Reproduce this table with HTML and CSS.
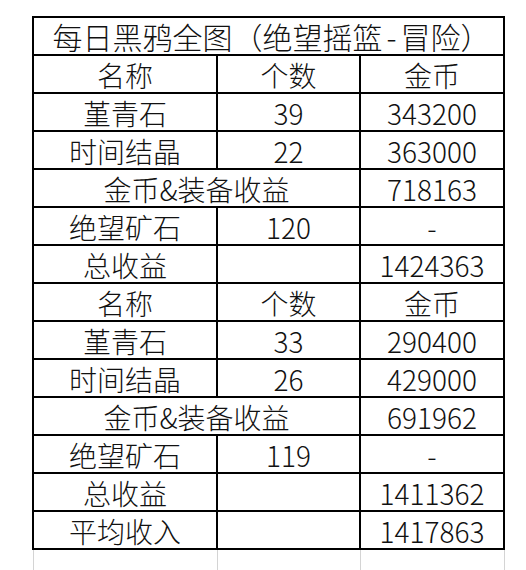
FILE: index.html
```html
<!DOCTYPE html>
<html lang="zh-CN">
<head>
<meta charset="utf-8">
<title>每日黑鸦全图</title>
<link rel="stylesheet" href="styles.css">
</head>
<body>
<div class="sheet">
  <div class="table">
    <div class="cell title span3">每日黑鸦全图（绝望摇篮<span class="dash">-</span>冒险）</div>

    <div class="cell">名称</div>
    <div class="cell">个数</div>
    <div class="cell">金币</div>

    <div class="cell">堇青石</div>
    <div class="cell">39</div>
    <div class="cell">343200</div>

    <div class="cell">时间结晶</div>
    <div class="cell">22</div>
    <div class="cell">363000</div>

    <div class="cell span2">金币&amp;装备收益</div>
    <div class="cell">718163</div>

    <div class="cell">绝望矿石</div>
    <div class="cell">120</div>
    <div class="cell">-</div>

    <div class="cell">总收益</div>
    <div class="cell"></div>
    <div class="cell">1424363</div>

    <div class="cell">名称</div>
    <div class="cell">个数</div>
    <div class="cell">金币</div>

    <div class="cell">堇青石</div>
    <div class="cell">33</div>
    <div class="cell">290400</div>

    <div class="cell">时间结晶</div>
    <div class="cell">26</div>
    <div class="cell">429000</div>

    <div class="cell span2">金币&amp;装备收益</div>
    <div class="cell">691962</div>

    <div class="cell">绝望矿石</div>
    <div class="cell">119</div>
    <div class="cell">-</div>

    <div class="cell">总收益</div>
    <div class="cell"></div>
    <div class="cell">1411362</div>

    <div class="cell">平均收入</div>
    <div class="cell"></div>
    <div class="cell">1417863</div>
  </div>
  <div class="below">
    <div class="gl"></div>
    <div class="gl"></div>
    <div class="gl"></div>
    <div class="gl"></div>
  </div>
</div>
</body>
</html>
```

FILE: styles.css
```css
html, body {
  margin: 0;
  padding: 0;
  background: #ffffff;
}

body {
  font-family: "Noto Sans CJK SC", "Noto Sans", sans-serif;
  font-weight: 300;
  color: #111111;
}

.sheet {
  width: 526px;
  height: 570px;
  overflow: hidden;
  padding-top: 16px;
  box-sizing: border-box;
}

.table {
  display: grid;
  grid-template-columns: 182px 141px 142px;
  grid-auto-rows: 36px;
  gap: 2px;
  padding: 2px;
  background: #000000;
  width: fit-content;
  margin-left: 32px;
}

.cell {
  background: #ffffff;
  font-size: 28px;
  line-height: 34px;
  padding-top: 2px;
  box-sizing: border-box;
  text-align: center;
  white-space: nowrap;
}

.span2 {
  grid-column: span 2;
}

.span3 {
  grid-column: span 3;
}

.title {
  font-size: 30px;
  line-height: 35px;
  padding-top: 1px;
  padding-left: 6px;
}

.dash {
  margin: 0 4px;
}

.below {
  display: grid;
  grid-template-columns: 184px 143px 144px 1px;
  height: 20px;
  margin-left: 33px;
}

.gl {
  border-left: 1px solid #d4d4d4;
}
```
